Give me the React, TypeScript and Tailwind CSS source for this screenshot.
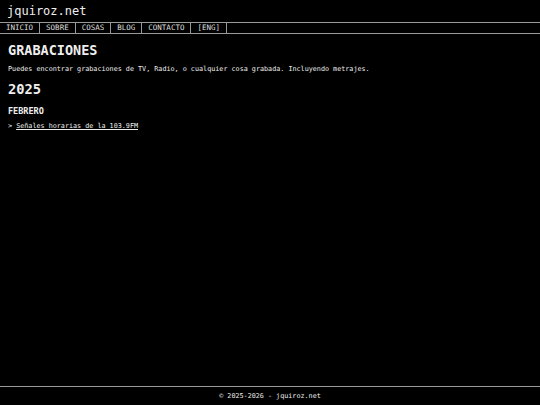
export default function App() {
  const nav = ["INICIO", "SOBRE", "COSAS", "BLOG", "CONTACTO", "[ENG]"];

  return (
    <div className="flex flex-col min-h-screen bg-black text-[#eeeeee] font-['DejaVu_Sans_Mono',monospace]">
      <header className="h-[22px] flex items-center px-[7px]">
        <span className="text-[12px] leading-none">jquiroz.net</span>
      </header>

      <nav className="flex border-y border-[#999999]">
        {nav.map((item) => (
          <a
            key={item}
            href="#"
            className="px-[6px] border-r border-[#999999] text-[7.5px] leading-[10px] text-[#dddddd]"
          >
            {item}
          </a>
        ))}
      </nav>

      <main className="px-[8px] pt-[8px]">
        <h1 className="text-[13.5px] leading-[17px] font-bold">GRABACIONES</h1>
        <p className="mt-[6px] text-[6.75px] leading-[9px]">
          Puedes encontrar grabaciones de TV, Radio, o cualquier cosa grabada. Incluyendo metrajes.
        </p>
        <h2 className="mt-[6px] text-[13.75px] leading-[18px] font-bold">2025</h2>
        <h3 className="mt-[8px] text-[8.5px] leading-[11px] font-bold">FEBRERO</h3>
        <ul className="mt-[5px] text-[6.75px] leading-[9px]">
          <li>
            &gt; <a href="#" className="underline">Señales horarias de la 103.9FM</a>
          </li>
        </ul>
      </main>

      <footer className="mt-auto h-[19px] flex items-center justify-center border-t border-[#999999] text-[6.75px]">
        © 2025-2026 - jquiroz.net
      </footer>
    </div>
  );
}
